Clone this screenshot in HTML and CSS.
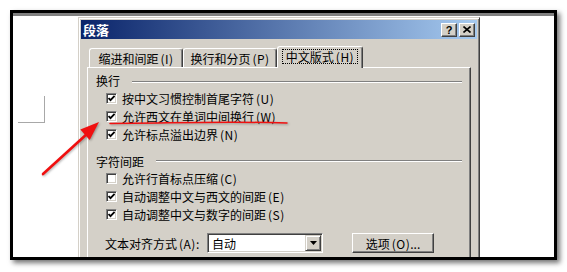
FILE: index.html
```html
<!DOCTYPE html>
<html lang="zh-CN">
<head>
<meta charset="utf-8">
<title>段落</title>
<link rel="stylesheet" href="styles.css">
</head>
<body>
<div class="screen">
  <div class="frame">
    <div class="strip"></div>
    <div class="workspace">
      <div class="page-left"><div class="corner"></div></div>
      <div class="dialog">
        <div class="titlebar">
          <span class="title">段落</span>
          <div class="tbtns">
            <span class="tbtn q">?</span>
            <span class="tbtn"><svg width="8" height="7" viewBox="0 0 8 7"><path d="M0.5 0.5 L7.5 6.5 M7.5 0.5 L0.5 6.5" stroke="#000" stroke-width="1.6"/></svg></span>
          </div>
        </div>
        <div class="dbody">
          <div class="tabs">
            <div class="tab t1">缩进和间距<span class="mn">(I)</span></div>
            <div class="tab t2">换行和分页<span class="mn">(P)</span></div>
            <div class="tab t3 active"><span class="focus">中文版式<span class="mn">(H)</span></span></div>
          </div>
          <div class="panel">
            <div class="group g1"><span>换行</span><span class="etch"></span></div>
            <div class="row first"><span class="cb"><svg width="7" height="7" viewBox="0 0 7 7"><path d="M0.5 3 L2.5 5.2 L6.6 0.8" fill="none" stroke="#000" stroke-width="1.8"/></svg></span>按中文习惯控制首尾字符<span class="mn">(U)</span></div>
            <div class="row"><span class="cb"><svg width="7" height="7" viewBox="0 0 7 7"><path d="M0.5 3 L2.5 5.2 L6.6 0.8" fill="none" stroke="#000" stroke-width="1.8"/></svg></span>允许西文在单词中间换行<span class="mn">(W)</span></div>
            <div class="row"><span class="cb"><svg width="7" height="7" viewBox="0 0 7 7"><path d="M0.5 3 L2.5 5.2 L6.6 0.8" fill="none" stroke="#000" stroke-width="1.8"/></svg></span>允许标点溢出边界<span class="mn">(N)</span></div>
            <div class="group g2"><span>字符间距</span><span class="etch"></span></div>
            <div class="row"><span class="cb"></span>允许行首标点压缩<span class="mn">(C)</span></div>
            <div class="row"><span class="cb"><svg width="7" height="7" viewBox="0 0 7 7"><path d="M0.5 3 L2.5 5.2 L6.6 0.8" fill="none" stroke="#000" stroke-width="1.8"/></svg></span>自动调整中文与西文的间距<span class="mn">(E)</span></div>
            <div class="row"><span class="cb"><svg width="7" height="7" viewBox="0 0 7 7"><path d="M0.5 3 L2.5 5.2 L6.6 0.8" fill="none" stroke="#000" stroke-width="1.8"/></svg></span>自动调整中文与数字的间距<span class="mn">(S)</span></div>
            <div class="bottom">
              <span class="blabel">文本对齐方式<span class="mn">(A)</span>:</span>
              <div class="combo"><span class="combo-text">自动</span><span class="drop"><svg width="7" height="4" viewBox="0 0 7 4"><path d="M0 0 H7 L3.5 4 Z" fill="#000"/></svg></span></div>
              <div class="btn">选项<span class="mn">(O)</span>...</div>
            </div>
          </div>
        </div>
      </div>
    </div>
  </div>
  <svg class="annot" width="567" height="272" viewBox="0 0 567 272">
    <path d="M110 123.4 C 170 123.2, 225 121, 287 123" fill="none" stroke="#f01010" stroke-width="1.5" stroke-linecap="round"/>
    <line x1="43" y1="174" x2="88" y2="133" stroke="#f01010" stroke-width="2.6" stroke-linecap="round"/>
    <polygon points="99,122 80.3,129.5 89.7,140" fill="#f01010"/>
  </svg>
</div>
</body>
</html>
```
FILE: styles.css
```css
* { box-sizing: border-box; }
body {
  margin: 0;
  background: #fff;
  font-family: "Noto Sans CJK SC", "Noto Sans", sans-serif;
  font-size: 12px;
  color: #000;
}
.screen {
  position: relative;
  width: 567px;
  height: 272px;
  padding: 10px 0 0 10px;
  overflow: hidden;
}
.frame {
  width: 547px;
  height: 250px;
  border: 3px solid #000;
  box-shadow: 3px 3px 5px rgba(0, 0, 0, 0.55);
  display: flex;
  flex-direction: column;
  overflow: hidden;
  background: #fff;
}
.strip { height: 3px; background: #808080; flex-shrink: 0; }
.workspace { display: flex; flex: 1; min-height: 0; }
.page-left { width: 65px; flex-shrink: 0; padding: 80px 0 0 5px; }
.corner {
  width: 27px;
  height: 27px;
  border-right: 1px solid #a8a8a8;
  border-bottom: 1px solid #a8a8a8;
}
.dialog {
  width: 402px;
  height: 280px;
  flex-shrink: 0;
  margin-top: 1px;
  background: #d4d0c8;
  border: 1px solid;
  border-color: #d4d0c8 #404040 #404040 #d4d0c8;
  box-shadow: inset 1px 1px #fff, inset -1px -1px #808080;
  padding: 2px;
}
.titlebar {
  height: 19px;
  display: flex;
  align-items: center;
  justify-content: space-between;
  padding: 0 2px 0 2px;
  background: linear-gradient(to right, #0a246a, #a6caf0);
}
.title { color: #fff; font-weight: bold; font-size: 13px; line-height: 19px; }
.tbtns { display: flex; gap: 2px; }
.tbtn {
  width: 16px;
  height: 14px;
  background: #d4d0c8;
  border: 1px solid;
  border-color: #fff #404040 #404040 #fff;
  box-shadow: inset -1px -1px #808080;
  display: flex;
  align-items: center;
  justify-content: center;
}
.tbtn.q { font: bold 11px "Liberation Sans", sans-serif; line-height: 12px; }
.dbody { padding: 7px 6px 0 6px; }
.tabs { display: flex; align-items: flex-end; height: 21px; padding-left: 2px; }
.tab {
  height: 19px;
  display: flex;
  align-items: center;
  justify-content: center;
  border-top: 1px solid #fff;
  border-left: 1px solid #fff;
  border-right: 1px solid #404040;
  box-shadow: inset -1px 0 #808080;
  border-radius: 3px 3px 0 0;
  background: #d4d0c8;
}
.t1 { width: 94px; }
.t2 { width: 94px; }
.t3 { width: 86px; }
.tab.active {
  height: 22px;
  margin-bottom: -1px;
  position: relative;
  z-index: 1;
  padding-bottom: 2px;
}
.focus { border: 1px dotted #000; padding: 0 3px; line-height: 13px; }
.mn { margin-left: 2px; letter-spacing: 0.5px; }
.panel {
  height: 200px;
  border-top: 1px solid #fff;
  border-left: 1px solid #fff;
  border-right: 1px solid #404040;
  box-shadow: inset -1px 0 #808080;
}
.group { display: flex; align-items: center; height: 16px; padding-left: 8px; }
.g1 { margin-top: 4px; }
.g2 { margin-top: 10px; }
.etch {
  flex: 1;
  margin: 3px 8px 0 12px;
  border-top: 1px solid #808080;
  border-bottom: 1px solid #fff;
}
.g2 .etch { margin-top: 0; }
.row { display: flex; align-items: center; height: 18px; padding-left: 18px; }
.row.first { margin-top: 1px; }
.cb {
  width: 11px;
  height: 11px;
  flex-shrink: 0;
  background: #fff;
  border: 1px solid;
  border-color: #808080 #fff #fff #808080;
  box-shadow: inset 1px 1px #404040, inset -1px -1px #d4d0c8;
  margin-right: 5px;
  display: flex;
  align-items: center;
  justify-content: center;
}
.cb svg { display: block; }
.bottom { display: flex; align-items: center; margin-top: 10px; height: 20px; padding-left: 17px; }
.blabel { width: 102px; flex-shrink: 0; }
.combo {
  width: 116px;
  height: 20px;
  background: #fff;
  border: 1px solid;
  border-color: #808080 #fff #fff #808080;
  box-shadow: inset 1px 1px #404040, inset -1px -1px #d4d0c8;
  display: flex;
  align-items: center;
  padding: 1px 1px 1px 4px;
}
.combo-text { flex: 1; }
.drop {
  width: 16px;
  height: 16px;
  background: #d4d0c8;
  border: 1px solid;
  border-color: #d4d0c8 #404040 #404040 #d4d0c8;
  box-shadow: inset 1px 1px #fff, inset -1px -1px #808080;
  display: flex;
  align-items: center;
  justify-content: center;
}
.btn {
  width: 82px;
  height: 20px;
  margin-left: 29px;
  border: 1px solid;
  border-color: #fff #404040 #404040 #fff;
  box-shadow: inset -1px -1px #808080;
  display: flex;
  align-items: center;
  justify-content: center;
}
.annot {
  position: absolute;
  left: 0;
  top: 0;
  pointer-events: none;
  filter: drop-shadow(1px 1px 1px rgba(0, 0, 0, 0.3));
}
```
